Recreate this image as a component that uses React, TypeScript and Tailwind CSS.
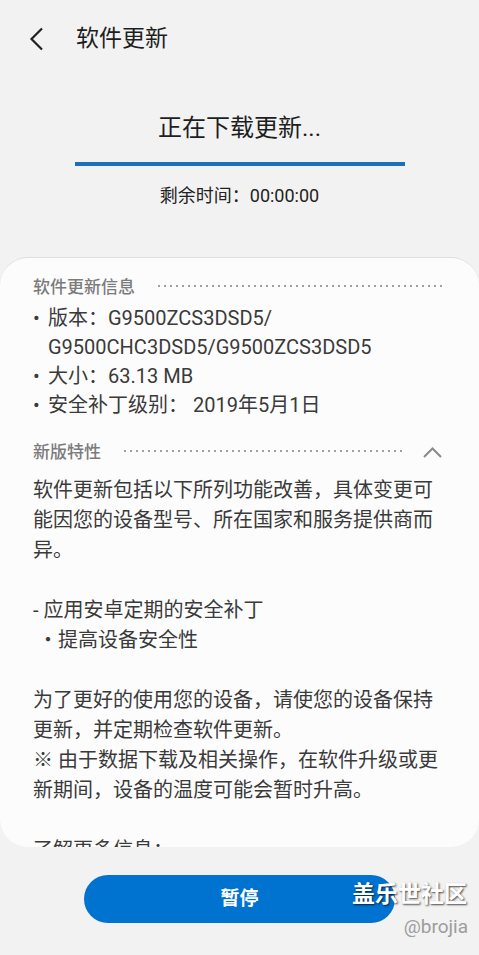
import React from 'react';

const cjk = "font-['Roboto','Noto_Sans_CJK_SC',sans-serif]";

function SectionHeader({ title, collapsible }: { title: string; collapsible?: boolean }) {
  return (
    <div className="flex items-center h-[30px]">
      <span className="text-[17px] leading-[30px] text-[#7b7b7b] font-medium">{title}</span>
      <div className="flex-1 ml-[23px] h-[2px] mt-[-3px] bg-[linear-gradient(to_right,#a0a0a0_2px,transparent_2px)] bg-[length:6px_2px] bg-repeat-x" />
      {collapsible && (
        <svg className="ml-[20px] mr-[4px]" width="19" height="11" viewBox="0 0 19 11" fill="none">
          <path d="M1 10 L9.5 1.5 L18 10" stroke="#8a8a8a" strokeWidth="2" />
        </svg>
      )}
    </div>
  );
}

function Bullet({ children }: { children: React.ReactNode }) {
  return (
    <div className="flex">
      <span className="w-[15px] shrink-0">•</span>
      <div>{children}</div>
    </div>
  );
}

export default function App() {
  const lines = [
    '软件更新包括以下所列功能改善，具体变更可',
    '能因您的设备型号、所在国家和服务提供商而',
    '异。',
    '',
    '- 应用安卓定期的安全补丁',
    ' ・提高设备安全性',
    '',
    '为了更好的使用您的设备，请使您的设备保持',
    '更新，并定期检查软件更新。',
    '※ 由于数据下载及相关操作，在软件升级或更',
    '新期间，设备的温度可能会暂时升高。',
    '',
    '了解更多信息：',
  ];

  return (
    <div className={`relative w-[479px] h-[955px] bg-[#f2f2f2] overflow-hidden ${cjk}`}>
      {/* header */}
      <div className="h-[78px] flex items-center">
        <svg className="ml-[29px]" width="15" height="24" viewBox="0 0 15 24" fill="none">
          <path d="M13 1.5 L2.5 12 L13 22.5" stroke="#222" strokeWidth="2.2" />
        </svg>
        <span className="ml-[32px] text-[23px] text-[#1e1e1e]">软件更新</span>
      </div>

      {/* progress */}
      <div className="flex flex-col items-center">
        <div className="mt-[34px] text-[24px] leading-[32px] text-[#1e1e1e]">正在下载更新...</div>
        <div className="mt-[18px] w-[330px] h-[4px] bg-[#1b70b9]" />
        <div className="mt-[18px] text-[18px] leading-[24px] text-[#222]">剩余时间：00:00:00</div>
      </div>

      {/* card */}
      <div className="mt-[49px] h-[590px] rounded-[28px] bg-[#fcfcfc] border-t border-[#dedede] overflow-hidden px-[33px] pt-[14px] text-[20px] text-[#3a3a3a]">
        <SectionHeader title="软件更新信息" />
        <div className="mt-[2px] leading-[29px]">
          <Bullet>
            版本：G9500ZCS3DSD5/
            <br />
            G9500CHC3DSD5/G9500ZCS3DSD5
          </Bullet>
          <Bullet>大小：63.13 MB</Bullet>
          <Bullet>安全补丁级别： 2019年5月1日</Bullet>
        </div>
        <div className="mt-[17px]">
          <SectionHeader title="新版特性" collapsible />
        </div>
        <div className="mt-[8px] leading-[30px] whitespace-pre">
          {lines.map((l, i) => (
            <div key={i} className="h-[30px]">{l}</div>
          ))}
        </div>
      </div>

      {/* button */}
      <div className="flex justify-center mt-[28px]">
        <button className="w-[311px] h-[48px] rounded-full bg-[#0072cf] text-white text-[19px] font-bold">
          暂停
        </button>
      </div>

      {/* watermark */}
      <div className="absolute left-[352px] top-[878px] text-[23px] font-bold text-white [text-shadow:1px_1px_2px_rgba(0,0,0,0.7)]">
        盖乐世社区
      </div>
      <div className="absolute right-[11px] top-[913px] text-[19px] text-[#9d9d9d]">@brojia</div>
    </div>
  );
}
